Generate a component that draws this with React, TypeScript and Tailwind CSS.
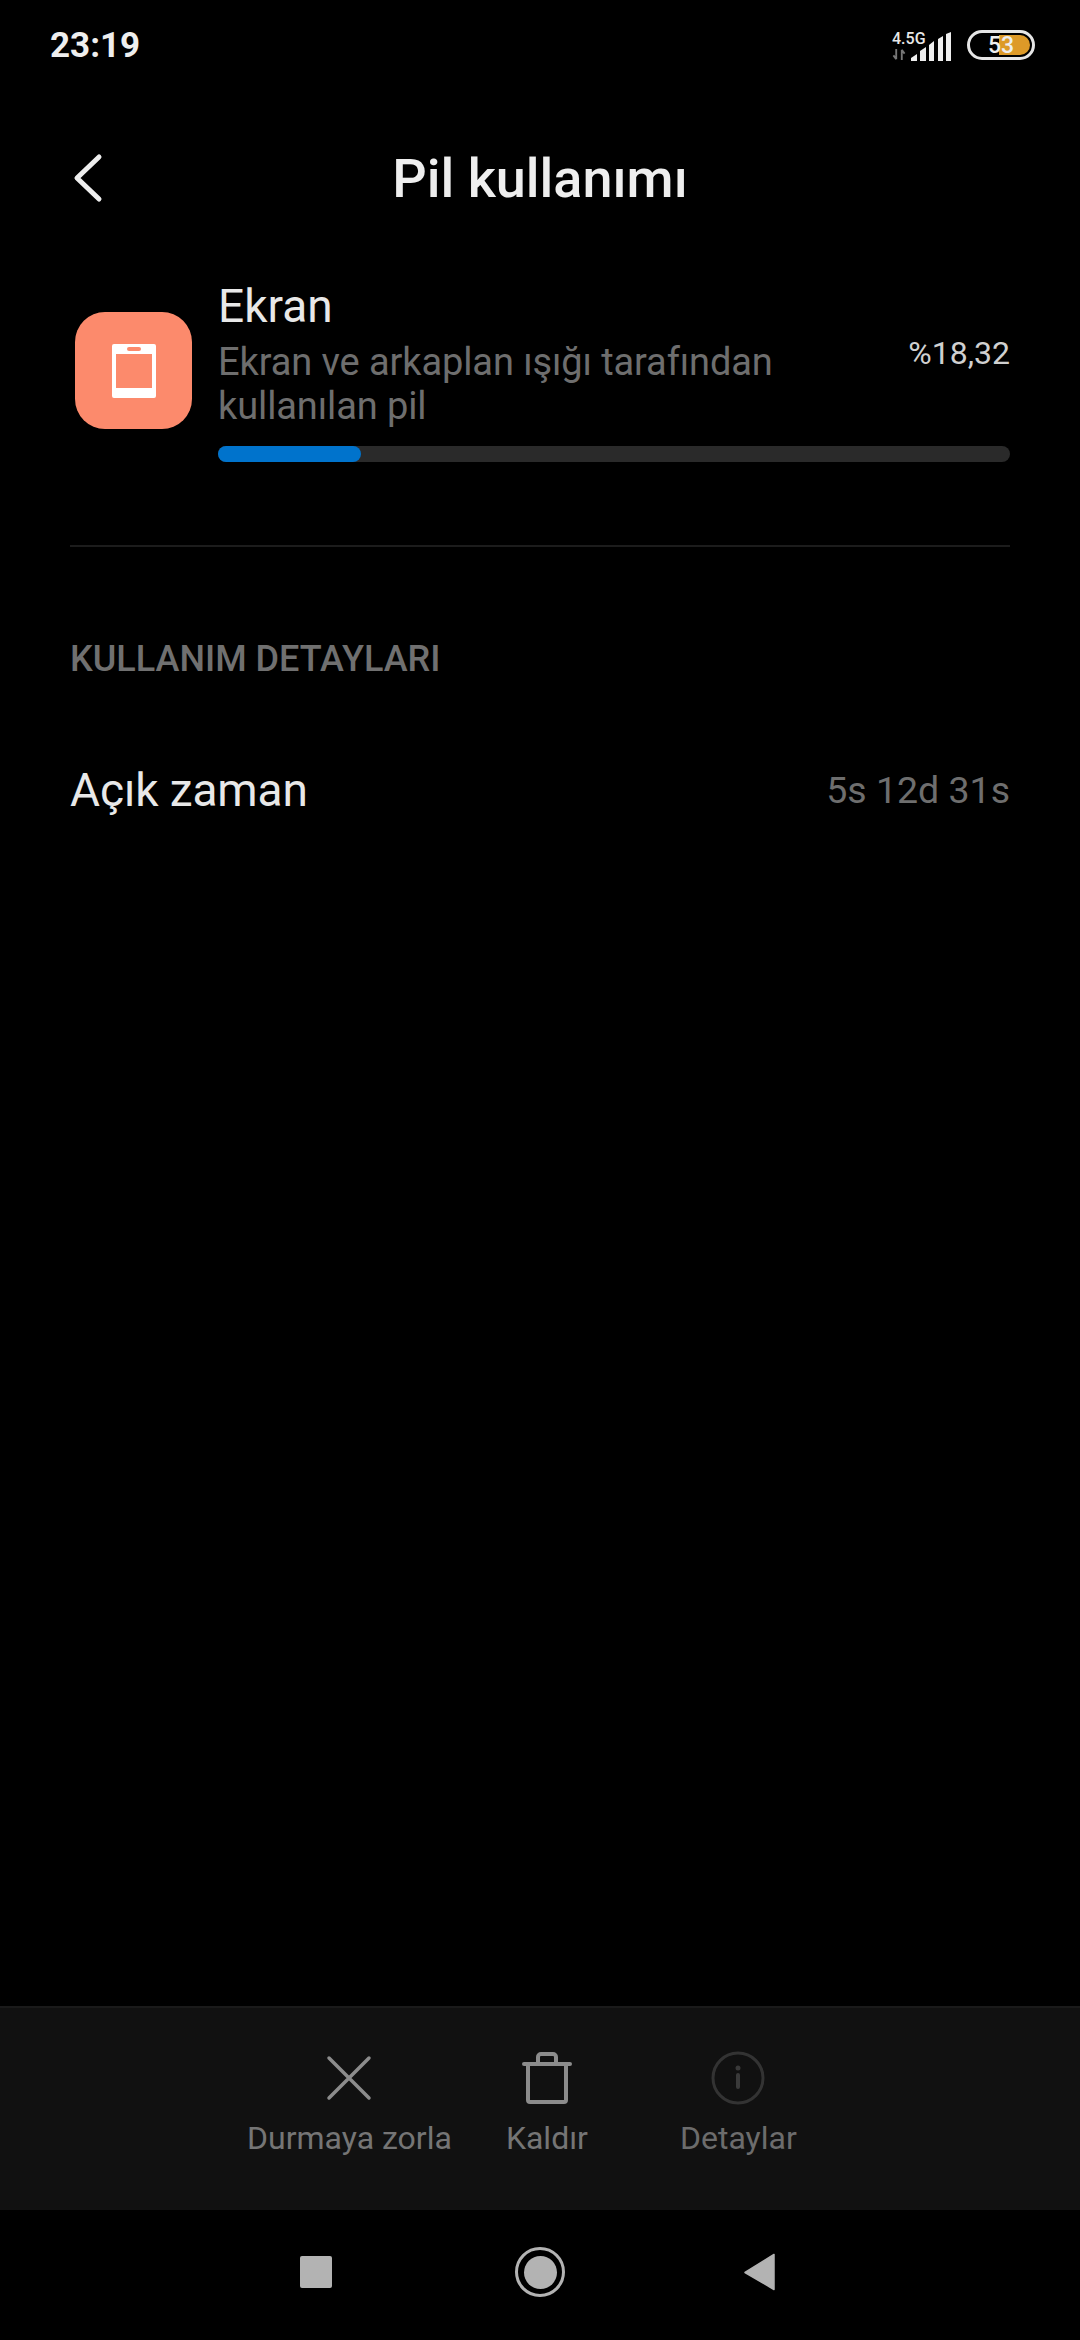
const ROBOTO = "font-['Roboto',sans-serif]";

const BottomAction = ({ label, dim, className, children }: { label: string; dim?: boolean; className?: string; children: React.ReactNode }) => (
  <div className={`flex flex-col items-center ${className ?? ""}`}>
    <div className="h-[56px] flex items-center justify-center">{children}</div>
    <span className={`text-[32px] leading-[40px] mt-[12px] ${dim ? "text-[#6c6c6c]" : "text-[#757575]"}`}>{label}</span>
  </div>
);

export default function App() {
  return (
    <div className={`${ROBOTO} w-[1080px] h-[2340px] bg-black flex flex-col text-[#e8e8e8] overflow-hidden`}>
      {/* status bar */}
      <div className="h-[90px] flex items-center justify-between pl-[50px] pr-[45px]">
        <span className="text-[35px] font-bold text-[#eeeeee] mt-[2px]">23:19</span>
        <div className="flex items-center gap-[16px]">
          <div className="flex items-end">
            <div className="flex flex-col items-start w-[34px] mr-[-15px]">
              <span className="text-[16px] leading-[17px] font-medium">4.5G</span>
              <svg width="14" height="13" viewBox="0 0 14 14" className="mt-[1px]">
                <path d="M4 1v11M4 12L1 8M10 13V2M10 2l3 4" stroke="#777" strokeWidth="2" fill="none" />
              </svg>
            </div>
            <svg width="40" height="29" viewBox="0 0 40 29">
              <path d="M0 29v-3L6 22V29zM9 29V19l6-4V29zM18 29V13l5-4V29zM27 29V7l5-3V29zM35 29V2l5-2V29z" fill="#eeeeee" />
            </svg>
          </div>
          <div className="relative w-[68px] h-[30px] rounded-full border-[3px] border-[#e6e6e6] flex items-center justify-center">
            <div className="absolute left-[29px] right-[2px] top-[2px] bottom-[2px] rounded-r-full rounded-l-[4px] bg-[#dd9a28]" />
            <span className="relative text-[23px] leading-none font-medium text-[#eeeeee]">53</span>
          </div>
        </div>
      </div>

      {/* header */}
      <div className="relative h-[90px] mt-[43px] flex items-center justify-center">
        <svg className="absolute left-[70px] top-[20px]" width="34" height="50" viewBox="0 0 34 50" fill="none">
          <path d="M29 4L7 25l22 21" stroke="#eeeeee" strokeWidth="5" strokeLinecap="round" strokeLinejoin="round" />
        </svg>
        <h1 className="text-[54px] font-medium text-[#eeeeee]">Pil kullanımı</h1>
      </div>

      {/* usage row */}
      <div className="flex mt-[56px] pl-[75px] pr-[70px]">
        <div className="w-[117px] h-[117px] mt-[33px] rounded-[30px] bg-[#fc8a6c] flex items-center justify-center shrink-0">
          <svg width="44" height="54" viewBox="0 0 44 54">
            <path fillRule="evenodd" d="M2 0h40a2 2 0 0 1 2 2v50a2 2 0 0 1-2 2H2a2 2 0 0 1-2-2V2a2 2 0 0 1 2-2zM4 10v34h36V10zM17 3a2 2 0 0 0 0 4h10a2 2 0 0 0 0-4z" fill="#ffffff" />
          </svg>
        </div>
        <div className="flex-1 ml-[26px]">
          <div className="flex items-center justify-between">
            <div>
              <div className="text-[46px] leading-[54px] text-[#e8e8e8]">Ekran</div>
              <div className="text-[38px] leading-[44px] mt-[7px] tracking-[-0.1px] text-[#6e6e6e] w-[600px]">Ekran ve arkaplan ışığı tarafından kullanılan pil</div>
            </div>
            <span className="text-[32px] text-[#d0d0d0] mb-[2px]">%18,32</span>
          </div>
          <div className="h-[16px] mt-[18px] rounded-full bg-[#2a2a2a]">
            <div className="h-full rounded-full bg-[#0073cc] w-[143px]" />
          </div>
        </div>
      </div>

      <div className="h-[2px] bg-[#1c1c1c] mx-[70px] mt-[83px]" />

      <div className="mx-[70px] mt-[92px] text-[36px] leading-[40px] font-medium text-[#707070]">KULLANIM DETAYLARI</div>

      <div className="flex items-center justify-between mx-[70px] mt-[84px] h-[54px]">
        <span className="text-[46px] text-[#e8e8e8] tracking-[-0.1px]">Açık zaman</span>
        <span className="text-[37.5px] text-[#6e6e6e]">5s 12d 31s</span>
      </div>

      <div className="flex-1" />

      {/* bottom actions */}
      <div className="h-[204px] bg-[#111111] border-t-2 border-[#1a1a1a] flex pl-[247px] pt-[42px] gap-[54px]">
        <BottomAction label="Durmaya zorla">
          <svg width="46" height="46" viewBox="0 0 46 46" fill="none">
            <path d="M3 3l40 40M43 3L3 43" stroke="#8c8c8c" strokeWidth="3.5" strokeLinecap="round" />
          </svg>
        </BottomAction>
        <BottomAction label="Kaldır">
          <svg width="50" height="52" viewBox="0 0 50 52" fill="none" stroke="#8c8c8c" strokeWidth="4">
            <path d="M2 12h46" strokeLinecap="round" />
            <path d="M6 12v36a2 2 0 0 0 2 2h34a2 2 0 0 0 2-2V12" />
            <path d="M16 12V5a3 3 0 0 1 3-3h12a3 3 0 0 1 3 3v7" />
          </svg>
        </BottomAction>
        <BottomAction label="Detaylar" dim className="ml-[38px]">
          <svg width="54" height="54" viewBox="0 0 54 54" fill="none">
            <circle cx="27" cy="27" r="25" stroke="#333333" strokeWidth="3" />
            <circle cx="27" cy="17" r="2.5" fill="#3a3a3a" />
            <path d="M27 24v12" stroke="#3a3a3a" strokeWidth="4" strokeLinecap="round" />
          </svg>
        </BottomAction>
      </div>

      {/* nav bar */}
      <div className="h-[130px] flex items-center justify-center">
        <div className="relative w-[800px] h-[60px] mb-[6px] flex items-center justify-center">
          <div className="absolute left-[160px] top-[14px] w-[32px] h-[32px] rounded-[2px] bg-[#b3b3b3]" />
          <div className="w-[50px] h-[50px] rounded-full border-[3px] border-[#b3b3b3] flex items-center justify-center">
            <div className="w-[33px] h-[33px] rounded-full bg-[#b3b3b3]" />
          </div>
          <svg className="absolute left-[604px] top-[11px]" width="32" height="38" viewBox="0 0 32 38">
            <path d="M30 1.5V36.5L1 19.5z" fill="#b3b3b3" stroke="#b3b3b3" strokeWidth="1.5" strokeLinejoin="round" />
          </svg>
        </div>
      </div>
    </div>
  );
}
